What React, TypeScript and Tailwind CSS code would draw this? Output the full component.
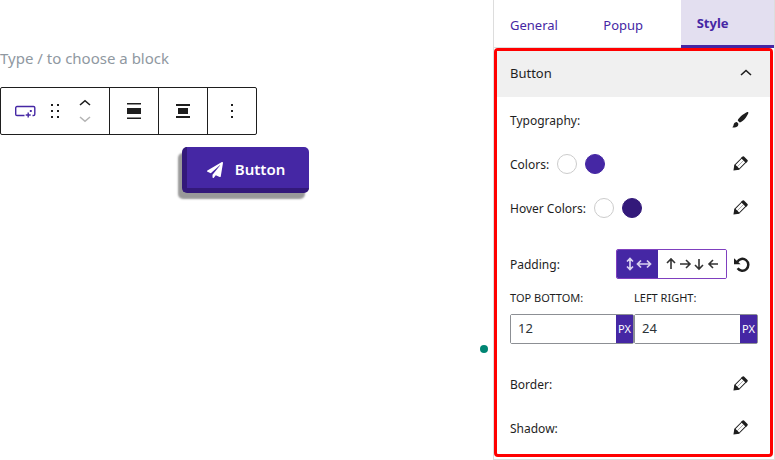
import { useState } from "react";
import type { ReactNode } from "react";
import { FaPaperPlane } from "react-icons/fa";

function PencilIcon() {
  return (
    <svg className="size-5" viewBox="0 0 20 20" aria-hidden="true">
      <g transform="translate(-.2 .2) rotate(45 10 10)">
        <rect x="7" y="4" width="6" height="10" fill="#fff" stroke="#1e1e1e" strokeWidth="1" />
        <path d="M10 4.500V14" stroke="#999" strokeWidth=".8" />
        <path d="M6.500 2.600a1 1 0 0 1 1-1h5a1 1 0 0 1 1 1V4.800h-7zM6.500 14.200L8 13.800h4l1.500.4L10 19z" fill="#1e1e1e" />
      </g>
    </svg>
  );
}

function BrushIcon() {
  return (
    <svg className="size-5 fill-[#1e1e1e]" viewBox="0 0 20 20" aria-hidden="true">
      <path d="M18.200 2.200c.5.5-.2 2-1.500 4-1.400 2.200-3.300 4.400-5.300 5.600-.8.500-1.500.7-2 .5L7.900 10.800c-.2-.6.100-1.200.7-2 1.300-1.900 3.500-3.700 5.700-5.100 2-1.300 3.400-2 3.900-1.500zM6.900 12l1.400 1.400c.2 1.500-.3 2.600-1.400 3.400-1.300.9-3.200.7-4.700.4 1-.5 1.200-1.500 1.400-2.500.4-1.600 1.600-2.600 3.300-2.700z" />
    </svg>
  );
}

function Row({ label, swatches, children }: { label: string; swatches?: string[]; children: ReactNode }) {
  return (
    <div className="flex h-11 items-center justify-between pr-2">
      <div className="flex items-center">
        <span className="pt-0.5 text-[12px] leading-5">{label}</span>
        {swatches && (
          <span className="ml-2 flex gap-2">
            {swatches.map((color) => (
              <span key={color} className={`size-5 rounded-full border ${color}`} />
            ))}
          </span>
        )}
      </div>
      {children}
    </div>
  );
}

function EditButton({ label, brush = false }: { label: string; brush?: boolean }) {
  return (
    <button type="button" aria-label={label}>
      {brush ? <BrushIcon /> : <PencilIcon />}
    </button>
  );
}

function UnitField({ id, label, value }: { id: string; label: string; value: string }) {
  return (
    <div className="min-w-0 flex-1">
      <label htmlFor={id} className="block h-7 text-[11px] leading-6">
        {label}
      </label>
      <div className="flex h-[30px] rounded-xs border border-[#8c8f94]">
        <input id={id} defaultValue={value} className="w-0 min-w-0 flex-1 bg-white px-[7px] text-[13px] text-[#2c3338] outline-none" />
        <button type="button" className="w-[17px] bg-[#4527a4] text-[11px] text-white">
          PX
        </button>
      </div>
    </div>
  );
}

function Toolbar() {
  const cell = "flex h-full w-[49px] items-center justify-center border-l border-[#1e1e1e]";
  return (
    <div role="toolbar" aria-label="Block tools" className="flex h-12 w-fit items-center rounded-xs border border-[#1e1e1e]">
      <div className="flex h-full w-[108px] items-center pl-3">
        <button type="button" aria-label="Button block">
          <svg className="size-6" viewBox="0 0 24 24" fill="none" stroke="#4527a4" strokeWidth="1.400">
            <path d="M11.500 16.500H4a1.300 1.300 0 0 1-1.300-1.300V8.800A1.300 1.300 0 0 1 4 7.500h16.500a1.300 1.300 0 0 1 1.300 1.300v6.400a1.300 1.300 0 0 1-1.300 1.300h-1" />
            <path d="M15.200 13.500v5M12.700 16h5M17.800 11v2M16.800 12h2" />
          </svg>
        </button>
        <button type="button" aria-label="Drag" className="ml-1.5">
          <svg className="size-6 fill-[#1e1e1e]" viewBox="0 0 24 24">
            <path d="M8 5h2v2H8zm6 0h2v2h-2zM8 11h2v2H8zm6 0h2v2h-2zM8 17h2v2H8zm6 0h2v2h-2z" />
          </svg>
        </button>
        <div className="ml-1.5 flex flex-col">
          <button type="button" aria-label="Move up">
            <svg className="h-4 w-6" viewBox="0 0 24 16" fill="none" stroke="#1e1e1e" strokeWidth="1.600">
              <path d="M7 10l5-4.300 5 4.300" />
            </svg>
          </button>
          <button type="button" aria-label="Move down" disabled>
            <svg className="h-4 w-6" viewBox="0 0 24 16" fill="none" stroke="#b5b5b5" strokeWidth="1.600">
              <path d="M7 6l5 4.300L17 6" />
            </svg>
          </button>
        </div>
      </div>
      <button type="button" aria-label="Align" className={cell}>
        <svg className="size-6 fill-[#1e1e1e]" viewBox="0 0 24 24">
          <path d="M5 4h14v1.500H5zM5 9h14v6H5zM5 18.500h14V20H5z" />
        </svg>
      </button>
      <button type="button" aria-label="Justify" className={cell}>
        <svg className="size-6 fill-[#1e1e1e]" viewBox="0 0 24 24">
          <path d="M5 5h14v2H5zM7 9h10v6H7zM5 17h14v2H5z" />
        </svg>
      </button>
      <button type="button" aria-label="Options" className={cell}>
        <svg className="size-6 fill-[#1e1e1e]" viewBox="0 0 24 24">
          <path d="M11 5h2v2h-2zM11 11h2v2h-2zM11 17h2v2h-2z" />
        </svg>
      </button>
    </div>
  );
}

const tabs = ["General", "Popup", "Style"];

export default function App() {
  const [open, setOpen] = useState(true);
  return (
    <div className="flex min-h-screen bg-white font-['Noto_Sans','Open_Sans',sans-serif] text-[13px] text-[#1e1e1e]">
      <main className="relative min-w-0 flex-1">
        <p className="pt-[46px] text-[15px] leading-6 text-[#8f98a1]">Type / to choose a block</p>
        <div className="pt-[17px]">
          <Toolbar />
        </div>
        <div className="flex justify-center pt-3">
          <button
            type="button"
            className="mr-0.5 flex h-[46px] items-center gap-3 rounded-[5px] border-b-[5px] border-l-[5px] border-[#33197a] bg-[#4527a4] pt-1 pr-6 pl-5 text-[15px] font-semibold text-white shadow-[-4px_6px_2px_#999]"
          >
            <FaPaperPlane className="size-4" />
            Button
          </button>
        </div>
        <span className="absolute top-[345px] right-[5px] size-2 rounded-full bg-[#008573]" />
      </main>

      <aside className="w-[282px] shrink-0 border-x border-[#ddd]">
        <div role="tablist" className="grid h-12 grid-cols-3">
          {tabs.map((tab) => (
            <button
              key={tab}
              role="tab"
              type="button"
              aria-selected={tab === "Style"}
              className={
                tab === "Style"
                  ? "border-b-3 border-[#4527a4] bg-[#e3dff0] px-4 pt-0.5 text-left font-bold text-[#4527a4]"
                  : "border-b border-[#ddd] px-4 pt-1 text-left text-[#4527a4]"
              }
            >
              {tab}
            </button>
          ))}
        </div>
        <section className="mr-px rounded-sm border-3 border-[#ff0000]">
          <h2>
            <button
              type="button"
              aria-expanded={open}
              onClick={() => setOpen(!open)}
              className="flex h-[46px] w-full items-center justify-between bg-[#f0f0f0] pr-3 pl-[13px]"
            >
              Button
              <svg className="size-6" viewBox="0 0 24 24" fill="none" stroke="#1e1e1e" strokeWidth="1.600">
                <path d="M7 13l5-4.500 5 4.500" />
              </svg>
            </button>
          </h2>
          {open && (
            <div className="pt-px pr-3 pb-1 pl-[13px]">
              <Row label="Typography:">
                <EditButton label="Edit typography" brush />
              </Row>
              <Row label="Colors:" swatches={["border-[#ccc] bg-white", "border-[#4527a4] bg-[#4527a4]"]}>
                <EditButton label="Edit colors" />
              </Row>
              <Row label="Hover Colors:" swatches={["border-[#ccc] bg-white", "border-[#33197a] bg-[#33197a]"]}>
                <EditButton label="Edit hover colors" />
              </Row>
              <div className="mt-3">
                <Row label="Padding:">
                  <div className="flex items-center gap-[7px]">
                    <div className="flex h-[30px] overflow-hidden rounded-xs border border-[#7f3fbf]">
                      <button type="button" aria-label="Linked sides" className="flex w-[41px] items-center justify-center bg-[#4527a4]">
                        <svg className="h-4 w-7" viewBox="0 0 28 16" fill="none" stroke="#d9d2f0" strokeWidth="1.700">
                          <path d="M6 3v10M3 5.500l3-3 3 3M3 10.500l3 3 3-3M14 8h12M17 4.500L13.500 8l3.500 3.500M23 4.500L26.500 8 23 11.500" />
                        </svg>
                      </button>
                      <button type="button" aria-label="Separate sides" className="flex w-[68px] items-center justify-center bg-white">
                        <svg className="h-4 w-14" viewBox="0 0 56 16" fill="none" stroke="#333" strokeWidth="1.600">
                          <path d="M7 3V13M3 7l4-4 4 4M16 8h10M22 4l4 4-4 4M35 3V13M31 9l4 4 4-4M54 8H45M49 4l-4 4 4 4" />
                        </svg>
                      </button>
                    </div>
                    <button type="button" aria-label="Reset padding">
                      <svg className="size-4" viewBox="0 0 16 16" fill="none" stroke="#1e1e1e" strokeWidth="2.500">
                        <path d="M3.300 5.800A5.900 5.900 0 1 1 3.600 12.200" />
                        <path d="M0 2.200V8.300h6.600z" fill="#1e1e1e" stroke="none" />
                      </svg>
                    </button>
                  </div>
                </Row>
              </div>
              <div className="mb-[18px] flex">
                <UnitField id="top-bottom" label="TOP BOTTOM:" value="12" />
                <UnitField id="left-right" label="LEFT RIGHT:" value="24" />
              </div>
              <Row label="Border:">
                <EditButton label="Edit border" />
              </Row>
              <Row label="Shadow:">
                <EditButton label="Edit shadow" />
              </Row>
            </div>
          )}
        </section>
        <div className="h-[3px] border-b border-[#ddd]" />
      </aside>
    </div>
  );
}
